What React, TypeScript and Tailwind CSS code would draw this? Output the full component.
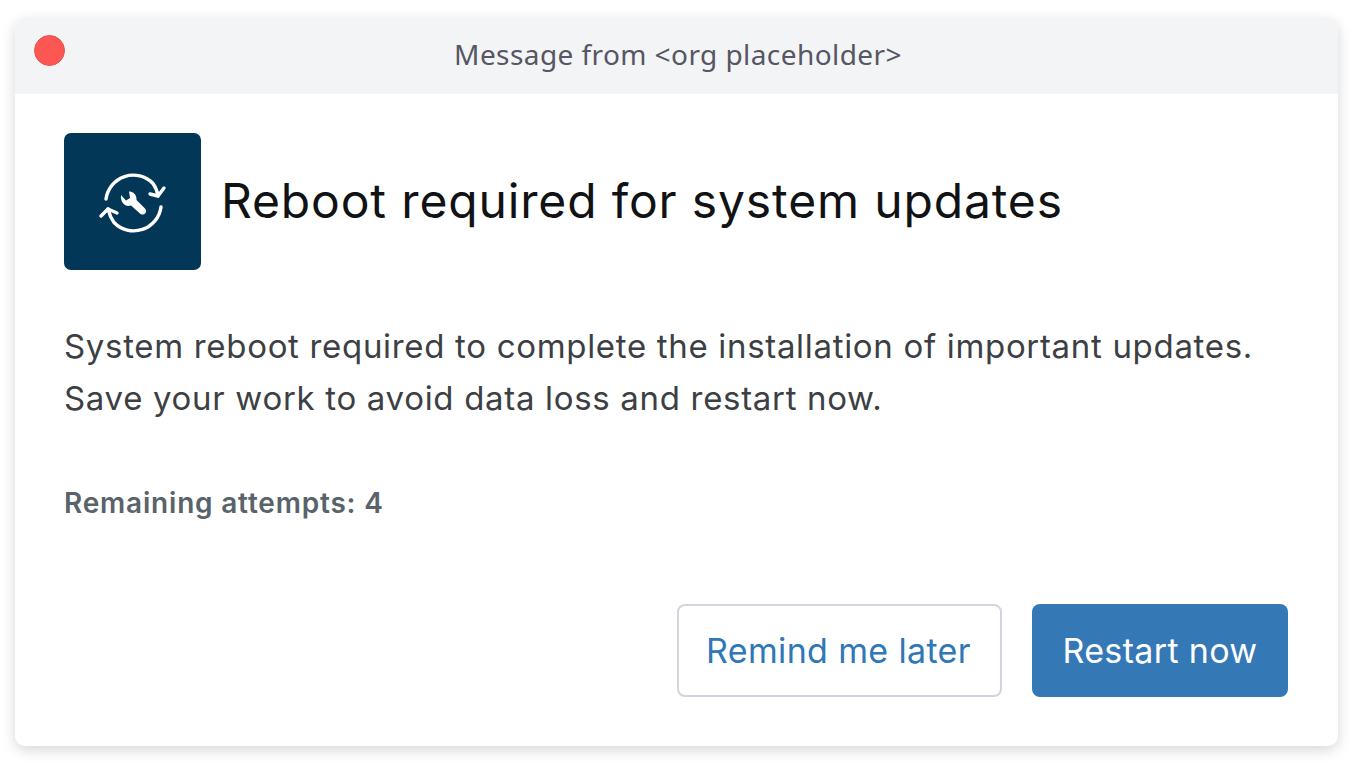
export default function App() {
  return (
    <div className="w-[1356px] h-[767px] overflow-hidden bg-white pl-[15px] pt-[18px] font-['Inter',sans-serif]">
      <div className="w-[1323px] h-[728px] rounded-[10px] bg-white shadow-[0_4px_14px_rgba(0,0,0,0.16)] overflow-hidden flex flex-col">
        <div className="relative h-[76px] shrink-0 bg-[#f3f4f6] flex items-center justify-center">
          <div className="absolute left-[19px] top-[17px] w-[31px] h-[31px] rounded-full bg-[#fd5754] border border-[#e9514e]" />
          <span className="font-['Noto_Sans',sans-serif] text-[28px] tracking-[0.42px] text-[#565664] leading-none mt-[-4px] ml-[3px]">Message from &lt;org placeholder&gt;</span>
        </div>
        <div className="flex-1 flex flex-col pl-[49px] pr-[50px] pt-[39px]">
          <div className="flex items-center gap-[20px]">
            <div className="w-[137px] h-[137px] rounded-[7px] bg-[#033757] flex items-center justify-center shrink-0">
              <svg width="70" height="70" viewBox="0 0 70 70" fill="none" stroke="white" strokeWidth="3.4" strokeLinecap="round" strokeLinejoin="round">
                <path d="M8 32 A27.5 27.5 0 0 1 55 16.5 Q59 22 60 29" />
                <path d="M52 27 L60 29 L66 21" />
                <path d="M63 40 A27.5 27.5 0 0 1 16 55.5 Q12 50 10 42" />
                <path d="M19 46 L10 42 L3 49" />
                <path fill="white" stroke="none" d="M23 28 L28 33.5 L32 31 L31 24.5 C35 24 39 28 38.5 33 L47 41.5 C49 44 48 46 46.5 47 C45 48 43 47.5 42 46.5 L33 38.5 C28 40.5 22 36 23 28 Z" />
              </svg>
            </div>
            <h1 className="text-[48px] font-[430] tracking-[0.85px] leading-none text-[#111214] mt-[-2px]">Reboot required for system updates</h1>
          </div>
          <p className="mt-[50px] text-[33px] leading-[52px] tracking-[0.68px] text-[#3c3f44]">
            System reboot required to complete the installation of important updates.
            <br />
            Save your work to avoid data loss and restart now.
          </p>
          <p className="mt-[63px] text-[28px] leading-[32px] tracking-[0.8px] font-semibold text-[#59636b]">Remaining attempts: 4</p>
          <div className="mt-[85px] flex justify-end gap-[30px]">
            <button className="w-[325px] h-[93px] rounded-[8px] border-2 border-[#d4d4e0] bg-white pr-[2px] text-[34px] tracking-[0.35px] text-[#2f77b6]">Remind me later</button>
            <button className="w-[256px] h-[93px] rounded-[8px] bg-[#3478b6] text-[34px] tracking-[0.35px] text-white">Restart now</button>
          </div>
        </div>
      </div>
    </div>
  );
}
